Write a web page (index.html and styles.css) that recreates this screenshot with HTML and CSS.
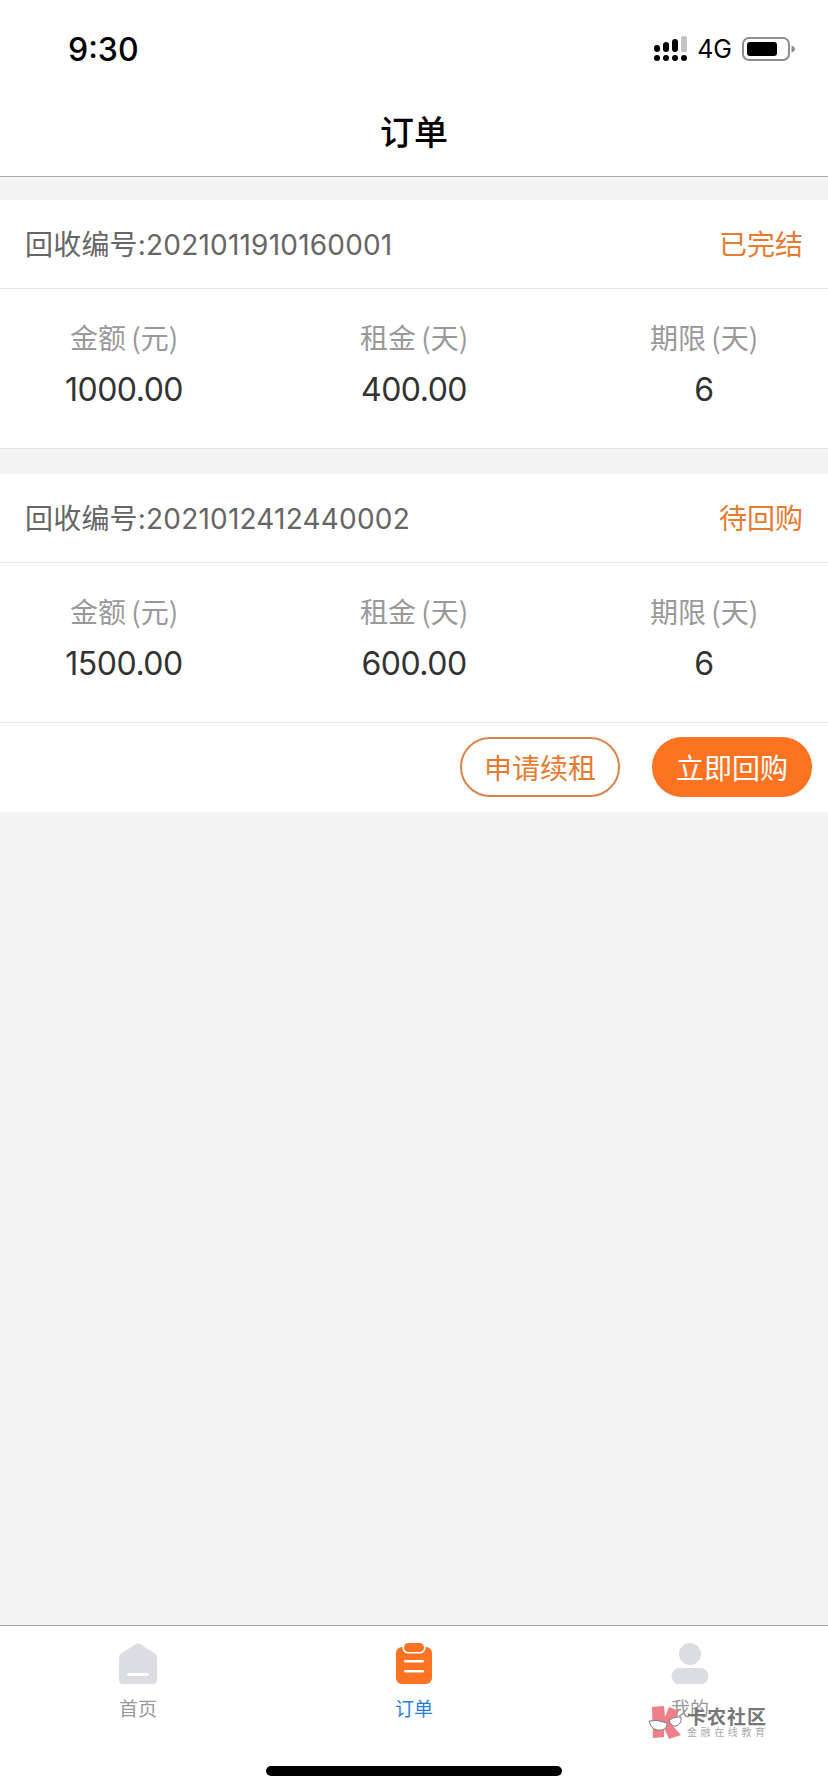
FILE: index.html
```html
<!DOCTYPE html>
<html lang="zh-CN">
<head>
    <meta charset="UTF-8">
    <meta name="viewport" content="width=device-width, initial-scale=1.0">
    <title>订单</title>
    <link rel="stylesheet" href="styles.css">
</head>
<body>
    <div class="page">
        <div class="status-bar">
            <span class="time">9:30</span>
            <div class="status-icons">
                <svg class="signal" width="33" height="26" viewBox="0 0 33 26">
                    <rect x="0" y="9" width="6" height="7" rx="3" fill="#000"/>
                    <rect x="9" y="6" width="6" height="10" rx="3" fill="#000"/>
                    <rect x="18" y="3" width="6" height="13" rx="3" fill="#000"/>
                    <rect x="27" y="0" width="6" height="16" rx="1.5" fill="#c4c4c4"/>
                    <circle cx="3" cy="22" r="3" fill="#000"/>
                    <circle cx="12" cy="22" r="3" fill="#000"/>
                    <circle cx="21" cy="22" r="3" fill="#000"/>
                    <circle cx="30" cy="22" r="3" fill="#000"/>
                </svg>
                <span class="net">4G</span>
                <svg class="battery" width="53" height="24" viewBox="0 0 53 24">
                    <rect x="1" y="1" width="46" height="22" rx="6" fill="#fff" stroke="#8e8e8e" stroke-width="2"/>
                    <rect x="5" y="5" width="30" height="14" rx="3" fill="#000"/>
                    <path d="M49.500 8.500 C52 9.500 53 10.500 53 12 C53 13.500 52 14.500 49.500 15.500 Z" fill="#8e8e8e"/>
                </svg>
            </div>
        </div>
        <div class="nav-bar">订单</div>

        <div class="orders">
            <div class="order">
                <div class="order-head">
                    <span class="order-no">回收编号:2021011910160001</span>
                    <span class="order-state">已完结</span>
                </div>
                <div class="stats">
                    <div class="stat"><p class="stat-label">金额 (元)</p><p class="stat-value">1000.00</p></div>
                    <div class="stat"><p class="stat-label">租金 (天)</p><p class="stat-value">400.00</p></div>
                    <div class="stat"><p class="stat-label">期限 (天)</p><p class="stat-value">6</p></div>
                </div>
            </div>
            <div class="order">
                <div class="order-head">
                    <span class="order-no">回收编号:2021012412440002</span>
                    <span class="order-state">待回购</span>
                </div>
                <div class="stats">
                    <div class="stat"><p class="stat-label">金额 (元)</p><p class="stat-value">1500.00</p></div>
                    <div class="stat"><p class="stat-label">租金 (天)</p><p class="stat-value">600.00</p></div>
                    <div class="stat"><p class="stat-label">期限 (天)</p><p class="stat-value">6</p></div>
                </div>
                <div class="order-actions">
                    <button class="btn btn-outline">申请续租</button>
                    <button class="btn btn-fill">立即回购</button>
                </div>
            </div>
        </div>

        <div class="tab-bar">
            <div class="tab">
                <svg width="38" height="41" viewBox="0 0 38 41">
                    <path d="M17 1 Q19 -0.300 21 1 L36 10.500 Q38 11.800 38 14 V37 Q38 41 34 41 H4 Q0 41 0 37 V14 Q0 11.800 2 10.500 Z" fill="#dcdde4"/>
                    <rect x="8" y="30" width="22" height="3" rx="1.500" fill="#fff"/>
                </svg>
                <span class="tab-label">首页</span>
            </div>
            <div class="tab tab-active">
                <svg width="36" height="41" viewBox="0 0 36 41">
                    <rect x="0" y="4" width="36" height="37" rx="6" fill="#fd7322"/>
                    <rect x="6.500" y="-1.500" width="23" height="12" rx="5.500" fill="#fff"/>
                    <rect x="8" y="0" width="20" height="9" rx="4.500" fill="#fd7322"/>
                    <rect x="8" y="17" width="20" height="2.500" rx="1.250" fill="#fff"/>
                    <rect x="8" y="27" width="20" height="2.500" rx="1.250" fill="#fff"/>
                </svg>
                <span class="tab-label">订单</span>
            </div>
            <div class="tab">
                <svg width="38" height="41" viewBox="0 0 38 41">
                    <circle cx="19" cy="11" r="11" fill="#dcdde4"/>
                    <rect x="0.500" y="25" width="37" height="16.500" rx="8.250" fill="#dcdde4"/>
                </svg>
                <span class="tab-label">我的</span>
            </div>
        </div>
        <div class="home-bar"></div>

        <div class="watermark">
            <svg width="36" height="34" viewBox="0 0 36 34">
                <path d="M4 1 L16 0 L17 11 L21 1 L31 5 L23 18 L33 29 L21 33 L16 22 L16 31 L5 32 Z" fill="#ee7f88"/>
                <path d="M1 15 Q9 13 19 17 Q20 22 14 24 Q4 26 1 15 Z" fill="#fff" stroke="#777" stroke-width="1"/>
                <path d="M21 14 Q27 10 33 11 Q34 18 28 20 Q23 21 21 14 Z" fill="#fff" stroke="#777" stroke-width="1"/>
            </svg>
            <div class="watermark-text">
                <span class="watermark-name">卡农社区</span>
                <span class="watermark-sub">金融在线教育</span>
            </div>
        </div>
    </div>
</body>
</html>
```

FILE: styles.css
```css
* {
    box-sizing: border-box;
}
html, body {
    margin: 0;
    padding: 0;
}
body {
    font-family: Inter, "Noto Sans CJK SC", sans-serif;
    background-color: #f4f4f4;
}
p {
    margin: 0;
}
.page {
    position: relative;
    width: 828px;
    height: 1792px;
    display: flex;
    flex-direction: column;
    overflow: hidden;
}
.status-bar {
    height: 88px;
    background: white;
    display: flex;
    justify-content: space-between;
    align-items: center;
    padding: 12px 33px 2px 68px;
}
.time {
    font-size: 32px;
    font-weight: 500;
    color: #000;
}
.status-icons {
    display: flex;
    align-items: center;
    gap: 10px;
}
.net {
    font-size: 25px;
    color: #000;
}
.nav-bar {
    height: 89px;
    background: white;
    border-bottom: 1px solid #a9a9a9;
    display: flex;
    justify-content: center;
    align-items: center;
    padding-bottom: 4px;
    font-family: "Noto Sans CJK SC", sans-serif;
    font-size: 34px;
    font-weight: 500;
    color: #000;
}
.orders {
    flex: 1;
    padding-top: 23px;
    display: flex;
    flex-direction: column;
    gap: 25px;
}
.order {
    background: white;
}
.order-head {
    height: 89px;
    padding: 0 25px 3px;
    display: flex;
    justify-content: space-between;
    align-items: center;
    border-bottom: 1px solid #e6e6e6;
}
.order-no {
    font-size: 28px;
    letter-spacing: 0.2px;
    color: #666;
}
.order-state {
    font-family: "Noto Sans CJK SC", sans-serif;
    font-size: 28px;
    color: #e67b32;
}
.stats {
    height: 160px;
    padding: 26px 24px 0;
    display: flex;
    justify-content: space-between;
    border-bottom: 1px solid #e6e6e6;
}
.stat {
    width: 200px;
    text-align: center;
}
.stat-label {
    font-family: "Noto Sans CJK SC", sans-serif;
    font-size: 28px;
    line-height: 44px;
    word-spacing: -1px;
    color: #999;
}
.stat-value {
    font-size: 32px;
    line-height: 62px;
    letter-spacing: -0.5px;
    color: #333;
}
.order-actions {
    height: 89px;
    padding: 14px 16px 0;
    display: flex;
    justify-content: flex-end;
    gap: 32px;
}
.btn {
    width: 160px;
    height: 60px;
    border-radius: 30px;
    font-family: "Noto Sans CJK SC", sans-serif;
    font-size: 28px;
    padding: 0;
}
.btn-outline {
    background: white;
    border: 2px solid #d9844b;
    color: #e67b32;
}
.btn-fill {
    background-color: #fd7322;
    border: none;
    color: white;
}
.tab-bar {
    height: 167px;
    background: white;
    border-top: 1px solid #a9a9a9;
    display: flex;
    padding-top: 17px;
}
.tab {
    width: 276px;
    display: flex;
    flex-direction: column;
    align-items: center;
    gap: 10px;
}
.tab-label {
    font-family: "Noto Sans CJK SC", sans-serif;
    font-size: 19px;
    line-height: 28px;
    color: #999;
}
.tab-active .tab-label {
    color: #1f7fe0;
}
.home-bar {
    position: absolute;
    left: 266px;
    bottom: 16px;
    width: 296px;
    height: 10px;
    border-radius: 5px;
    background: #000;
}
.watermark {
    position: absolute;
    left: 648px;
    top: 1706px;
    display: flex;
    align-items: flex-start;
    gap: 3px;
}
.watermark-text {
    display: flex;
    flex-direction: column;
    align-items: flex-start;
    font-family: "Noto Sans CJK SC", sans-serif;
}
.watermark-name {
    font-size: 19px;
    line-height: 20px;
    letter-spacing: 1px;
    font-weight: 700;
    color: #777;
}
.watermark-sub {
    font-size: 10px;
    line-height: 12px;
    letter-spacing: 3.6px;
    color: #aaa;
}
```
